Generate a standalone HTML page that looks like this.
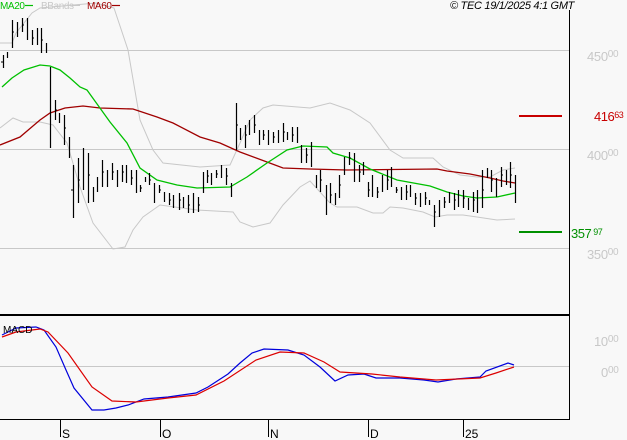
<!DOCTYPE html>
<html><head><meta charset="utf-8"><style>
html,body{margin:0;padding:0;background:#f8f8f8;}
svg{display:block}
text{font-family:"Liberation Sans",sans-serif;}
</style></head><body>
<svg width="627" height="440" viewBox="0 0 627 440" xmlns="http://www.w3.org/2000/svg">
<rect width="627" height="440" fill="#f8f8f8"/>
<g stroke="#c8c8c8" stroke-width="1" fill="none">
<line x1="0" y1="50.5" x2="569" y2="50.5"/>
<line x1="0" y1="149.5" x2="569" y2="149.5"/>
<line x1="0" y1="248.5" x2="569" y2="248.5"/>
<line x1="0" y1="366.5" x2="569" y2="366.5"/>
</g>
<g stroke="#000" fill="none">
<line x1="569.5" y1="10" x2="569.5" y2="420"/>
<line x1="0" y1="315" x2="570" y2="315" stroke-width="2"/>
<line x1="0" y1="419.5" x2="570" y2="419.5"/>
<line x1="60.5" y1="420" x2="60.5" y2="437"/>
<line x1="160.5" y1="420" x2="160.5" y2="437"/>
<line x1="268.5" y1="420" x2="268.5" y2="437"/>
<line x1="368.5" y1="420" x2="368.5" y2="437"/>
<line x1="463.5" y1="420" x2="463.5" y2="437"/>
</g>
<g font-size="12" fill="#000">
<text x="62" y="438">S</text><text x="162" y="438">O</text><text x="270" y="438">N</text><text x="370" y="438">D</text><text x="465" y="438">25</text>
</g>
<g stroke="#c8c8c8" stroke-width="1" fill="none">
<polyline points="0,43 12,43 16,33 32,13 40,8 96,3 114,8 128,50 140,120 153,150 163,163 200,167 230,165 240,143 250,120 263,108 273,105 310,108 330,103 350,110 370,123 390,150 403,158 433,158 443,167 460,175 477,177 490,177 503,170 515,168"/>
<polyline points="0,128 13,118 23,122 40,122 53,125 67,143 80,187 93,223 113,249 125,247 133,230 143,217 160,205 197,210 233,212 240,222 253,227 270,223 283,205 300,187 310,181 330,203 337,207 357,207 373,213 383,213 390,207 403,208 423,212 435,217 447,215 463,215 477,217 497,220 515,219"/>
</g>
<polyline fill="none" stroke="#a00000" stroke-width="1.3" points="0,145 20,137 40,120 50,113 65,108 83,106 100,108 133,109 157,117 173,123 200,137 220,143 240,152 267,162 283,168 310,169 347,170 437,169 447,171 470,174 490,178 503,181 515,183"/>
<polyline fill="none" stroke="#00c000" stroke-width="1.3" points="2,87 12,78 24,70 40,65 50,66 60,70 70,78 80,87 87,90 110,122 127,143 140,168 157,180 177,185 197,188 230,187 247,177 267,163 287,150 303,146 327,147 333,153 350,158 370,169 397,180 430,186 447,192 463,196 477,198 497,197 515,193"/>
<g stroke="#000" stroke-width="1.2" fill="none">
<path d="M3.5 55V68M7.5 52V58M12.5 20V48M17.5 22V37M22.5 18V32M27.5 18V40M32.5 30V45M37.5 28V45M41.5 28V53M46.5 43V53
M50.5 67V148M55.5 100V120M59.5 113V123M64.5 115V145M69.5 137V158M73.5 165V218M78.5 158V203M83.5 148V190M88.5 153V203M93.5 187V202M97.5 177V192M102.5 160V187M107.5 170V187M112.5 163V180M117.5 170V187M122.5 165V182M126.5 165V183M131.5 170V185M136.5 170V193M140.5 185V192M145.5 177V182M149.5 173V185M154.5 183V203M159.5 185V193M164.5 192V202M169.5 193V205M173.5 195V208M179.5 193V210M183.5 197V208M188.5 195V213M193.5 193V213M198.5 197V212M203.5 172V193M207.5 170V183M211.5 173V185M216.5 170V178M221.5 165V178M226.5 168V185M231.5 183V197M236.5 103V150M240.5 128V140M245.5 125V148M249.5 120V135M254.5 115V133M259.5 130V145M263.5 130V140M268.5 130V145M273.5 132V143M278.5 130V143M283.5 123V142M287.5 132V140M292.5 127V142M297.5 127V143
M301.5 145V163M306.5 148V163M311.5 142V167M316.5 175V188M320.5 170V192M326.5 185V215M330.5 183V203M335.5 193V205M339.5 175V198M344.5 157V175M349.5 152V165M354.5 153V182M359.5 165V182M363.5 162V175M368.5 182V197M372.5 175V197M377.5 187V198M382.5 175V192M387.5 170V190M391.5 167V187M396.5 187V193M401.5 187V200M406.5 185V200M410.5 185V197M415.5 193V205M420.5 193V207M425.5 192V205M429.5 200V205M434.5 205V227M439.5 200V217M444.5 197V208M449.5 192V203M454.5 193V210M458.5 190V207M463.5 190V208M468.5 198V210M473.5 192V212M477.5 190V213M482.5 170V208M487.5 168V178M491.5 170V192M496.5 178V197M501.5 167V187M506.5 170V185M510.5 162V188M515.5 175V203"/>
</g>
<g stroke="#000" stroke-width="1" fill="none">
<path d="M3 62h-2M12 32h2M22 25h2M32 38h2M41 40h2M55 110h2M64 128h2M73 190h-2M78 180h2M88 175h2M102 172h2M112 172h2M122 172h2M131 178h2M140 188h2M149 180h2M159 190h2M169 200h2M179 200h2M188 205h2M198 205h2M207 176h2M216 174h2M226 176h2M236 125h2M245 135h2M254 125h2M263 135h2M273 137h2M283 132h2M292 135h2M306 155h2M320 180h2M330 195h2M339 185h2M349 158h2M359 172h2M368 190h2M377 192h2M387 180h2M396 190h2M406 192h2M415 198h2M425 198h2M434 212h2M444 202h2M454 200h2M463 198h2M473 200h2M482 190h2M491 180h2M501 175h2M510 175h2"/>
</g>
<line x1="519" y1="116" x2="562" y2="116" stroke="#c80000" stroke-width="2"/>
<line x1="519" y1="232" x2="562" y2="232" stroke="#009000" stroke-width="2"/>
<text x="594" y="121" font-size="13" fill="#c80000" letter-spacing="-0.5">416<tspan font-size="9" dy="-3">63</tspan></text>
<text x="571" y="238" font-size="13" fill="#009000" letter-spacing="-0.5">357<tspan font-size="9" dy="-3"> 97</tspan></text>
<g font-size="13" fill="#c8c8c8" letter-spacing="-0.3">
<text x="587" y="61">450<tspan font-size="10" dy="-4">00</tspan></text>
<text x="587" y="160">400<tspan font-size="10" dy="-4">00</tspan></text>
<text x="587" y="259">350<tspan font-size="10" dy="-4">00</tspan></text>
<text x="594" y="346">10<tspan font-size="10" dy="-4">00</tspan></text>
<text x="601" y="377">0<tspan font-size="10" dy="-4">00</tspan></text>
</g>
<polyline fill="none" stroke="#0000dc" stroke-width="1.2" points="2,335 16,328 36,327 44,330 56,347 66,370 74,388 92,410 104,410 116,408 128,405 144,399 168,397 196,393 208,387 228,374 240,363 252,353 264,349 288,350 304,355 320,367 335,381 348,375 364,374 376,378 400,378 424,380 438,382 456,379 480,377 486,371 508,363 514,365"/>
<polyline fill="none" stroke="#dc0000" stroke-width="1.2" points="2,337 16,332 40,329 48,332 68,353 92,387 112,401 136,402 168,398 196,395 224,381 256,360 280,352 304,353 324,362 340,372 372,374 400,377 436,380 480,378 496,373 514,367"/>
<text x="3" y="333" font-size="10" fill="#000">MACD</text>
<g font-size="10">
<text x="0" y="9" fill="#00c000" letter-spacing="-0.4">MA20</text>
<line x1="25" y1="5.5" x2="33" y2="5.5" stroke="#00c000" stroke-width="1.2"/>
<text x="41" y="9" fill="#c8c8c8" letter-spacing="-0.4">BBands</text>
<line x1="72" y1="5.5" x2="80" y2="5.5" stroke="#c8c8c8"/>
<text x="87" y="9" fill="#a00000" letter-spacing="-0.4">MA60</text>
<line x1="112" y1="5.5" x2="120" y2="5.5" stroke="#a00000" stroke-width="1.2"/>
<text x="450" y="9" fill="#000" font-size="11" font-style="italic" letter-spacing="-0.3">© TEC 19/1/2025 4:1 GMT</text>
</g>
</svg>
</body></html>
